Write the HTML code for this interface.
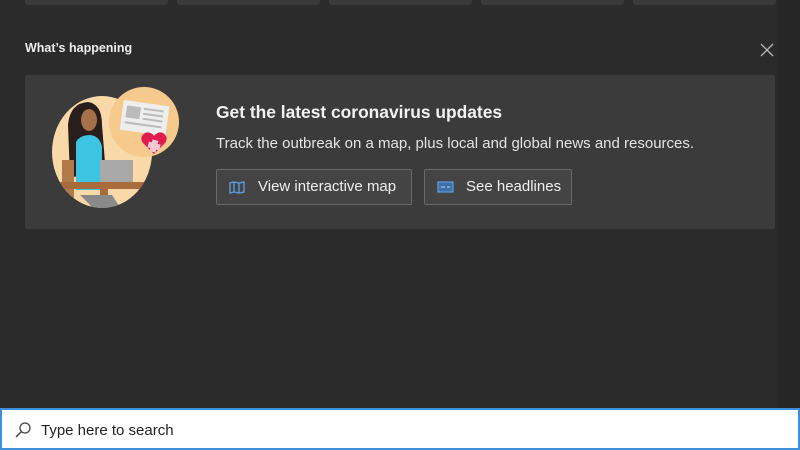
<!DOCTYPE html>
<html><head><meta charset="utf-8"><style>
*{margin:0;padding:0;box-sizing:border-box}
body{width:800px;height:450px;background:#2b2b2b;overflow:hidden;position:relative;font-family:"Liberation Sans",sans-serif;color:#fff}
.tile{position:absolute;top:-4px;height:9px;width:143px;background:#3a3a3a;border-radius:3px}
.strip{position:absolute;left:777px;top:0;width:23px;height:408px;background:#262626}
.hdr{position:absolute;left:25px;top:41px;font-size:12.5px;font-weight:bold;color:#eee}
.close{position:absolute;left:760px;top:43px}
.card{position:absolute;left:25px;top:75px;width:750px;height:154px;background:#3b3b3b;border-radius:2px}
.title{position:absolute;left:216px;top:102px;font-size:17.4px;font-weight:bold;color:#f2f2f2}
.sub{position:absolute;left:216px;top:135px;font-size:15px;color:#e4e4e4}
.btn{position:absolute;top:169px;height:36px;border:1px solid #6a6a6a;background:#444;border-radius:2px;font-size:15px;color:#eee;line-height:34px}
.search{position:absolute;left:0;top:408px;width:800px;height:42px;background:#fff;border:2px solid #3d8fdb}
.search span{position:absolute;left:39px;top:12px;font-size:15px;color:#222}
</style></head><body>
<div class="tile" style="left:25px"></div>
<div class="tile" style="left:177px"></div>
<div class="tile" style="left:329px"></div>
<div class="tile" style="left:481px"></div>
<div class="tile" style="left:633px"></div>
<div class="strip"></div>
<div class="hdr">What’s happening</div>
<svg class="close" width="14" height="14"><path d="M1 1L13 13M13 1L1 13" stroke="#bbb" stroke-width="1.3"/></svg>
<div class="card"></div>
<svg style="position:absolute;left:0;top:0" width="200" height="230">
<defs><clipPath id="c"><ellipse cx="102" cy="152" rx="50" ry="56"/></clipPath></defs>
<ellipse cx="102" cy="152" rx="50" ry="56" fill="#f9d9a8"/>
<circle cx="144" cy="122" r="35" fill="#f6c98d"/>
<g clip-path="url(#c)">
<path d="M68 125 Q70 103 88 102 Q102 104 102 125 L106 175 L70 177 Z" fill="#2a1e1c"/>
<rect x="62" y="160" width="12" height="55" fill="#b07a4a"/>
<path d="M76 142 Q80 135 90 135 Q100 136 102 147 L102 190 L76 190 Z" fill="#3cc4e2"/>
<ellipse cx="89" cy="120" rx="8" ry="11" fill="#a5704a"/>
<rect x="100" y="160" width="33" height="24" fill="#a8a8a8"/>
<rect x="60" y="182" width="110" height="7" fill="#a86b3c"/>
<rect x="100" y="189" width="8" height="30" fill="#a86b3c"/>
<path d="M80 195 L112 195 L125 215 L100 215 Z" fill="#8a8a8a"/>
</g>
<g transform="rotate(8 145 115)">
<rect x="122" y="103" width="46" height="30" fill="#eee"/>
<rect x="126" y="108" width="14" height="12" fill="#bbb"/>
<path d="M143 109h20M143 114h20M143 119h20M126 125h37" stroke="#bbb" stroke-width="2"/>
</g>
<path d="M154 154 L143 143 Q139 137 145 133 Q150 131 154 136 Q158 131 163 133 Q169 137 165 143 Z" fill="#e01b4e"/>
<path d="M151 140h6v3h3v6h-3v3h-6v-3h-3v-6h3z" fill="#f6c9d2" transform="rotate(15 154 146)"/>
</svg>
<div class="title">Get the latest coronavirus updates</div>
<div class="sub">Track the outbreak on a map, plus local and global news and resources.</div>
<div class="btn" style="left:216px;width:196px"><svg style="position:absolute;left:12px;top:11px" width="16" height="13"><path d="M1 2L5 1L10 2L15 1L15 11L10 12L5 11L1 12Z M5 1V11M10 2V12" fill="none" stroke="#5b9bdc" stroke-width="1.4"/></svg><span style="position:absolute;left:41px">View interactive map</span></div>
<div class="btn" style="left:424px;width:148px"><svg style="position:absolute;left:12px;top:11px" width="17" height="12"><rect x="1" y="1" width="15" height="10" fill="#3e6fa8" stroke="#5b9bdc" stroke-width="1.3"/><path d="M4 6h4M10 6h3" stroke="#9cc3ee" stroke-width="1.3"/></svg><span style="position:absolute;left:41px">See headlines</span></div>
<div class="search"><svg style="position:absolute;left:12px;top:11px" width="18" height="18"><circle cx="11" cy="7" r="5" fill="none" stroke="#444" stroke-width="1.3"/><path d="M7.4 10.6L2 16" stroke="#444" stroke-width="1.5"/></svg><span>Type here to search</span></div>
</body></html>
